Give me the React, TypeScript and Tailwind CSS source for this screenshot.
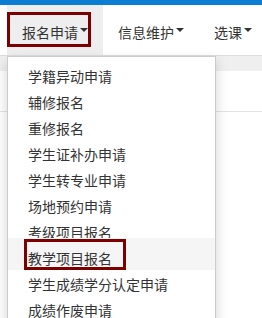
import React from 'react';

const menuItems = [
  '学籍异动申请',
  '辅修报名',
  '重修报名',
  '学生证补办申请',
  '学生转专业申请',
  '场地预约申请',
  '考级项目报名',
  '教学项目报名',
  '学生成绩学分认定申请',
  '成绩作废申请',
];

const tabs = ['报名申请', '信息维护', '选课'];

function Caret() {
  return (
    <span className="ml-[2px] inline-block h-0 w-0 border-x-[4px] border-t-[4px] border-x-transparent border-t-[#333] align-middle" />
  );
}

export default function App() {
  return (
    <div className="relative h-[318px] w-[262px] overflow-hidden bg-white font-['Noto_Sans_CJK_SC','Noto_Sans',sans-serif] text-[14px] text-[#333]">
      {/* top blue bar */}
      <div className="h-[5px] bg-[#0b7dd3]" />

      {/* nav */}
      <nav className="flex h-[50px] pl-[7px]">
        {tabs.map((tab, i) => (
          <div
            key={tab}
            className={`relative flex items-center px-[15px] leading-[20px] whitespace-nowrap ${i === 0 ? 'bg-[#eeeeee]' : ''}`}
          >
            <span className="pt-[3px]">{tab}</span>
            <Caret />
            {i === 0 && (
              <div className="absolute left-0 top-[7px] h-[35px] w-[84px] border-[3px] border-[#7d0000]" />
            )}
          </div>
        ))}
      </nav>

      {/* page area under nav */}
      <div className="h-[16px] border-t border-[#dddddd] bg-[#efefef]" />
      <div className="h-[40px]" />
      <div className="border-t border-[#e3e3e3]" />

      {/* dropdown menu */}
      <div className="absolute left-[7px] top-[56px] w-[209px] border border-[#cccccc] bg-white py-[5px] shadow-[0_6px_12px_rgba(0,0,0,0.175)]">
        {menuItems.map((item, i) => (
          <div
            key={item}
            className={`relative h-[26px] px-[20px] pt-[4px] leading-[20px] whitespace-nowrap ${i === 7 ? '' : ''}`}
          >
            {i === 7 && <div className="absolute inset-x-0 -top-[6px] bottom-0 bg-[#f5f5f5]" />}
            <span className="relative">{item}</span>
            {i === 7 && (
              <div className="absolute left-[16px] -top-[5px] h-[31px] w-[102px] border-[3px] border-[#7d0000]" />
            )}
          </div>
        ))}
      </div>
    </div>
  );
}
